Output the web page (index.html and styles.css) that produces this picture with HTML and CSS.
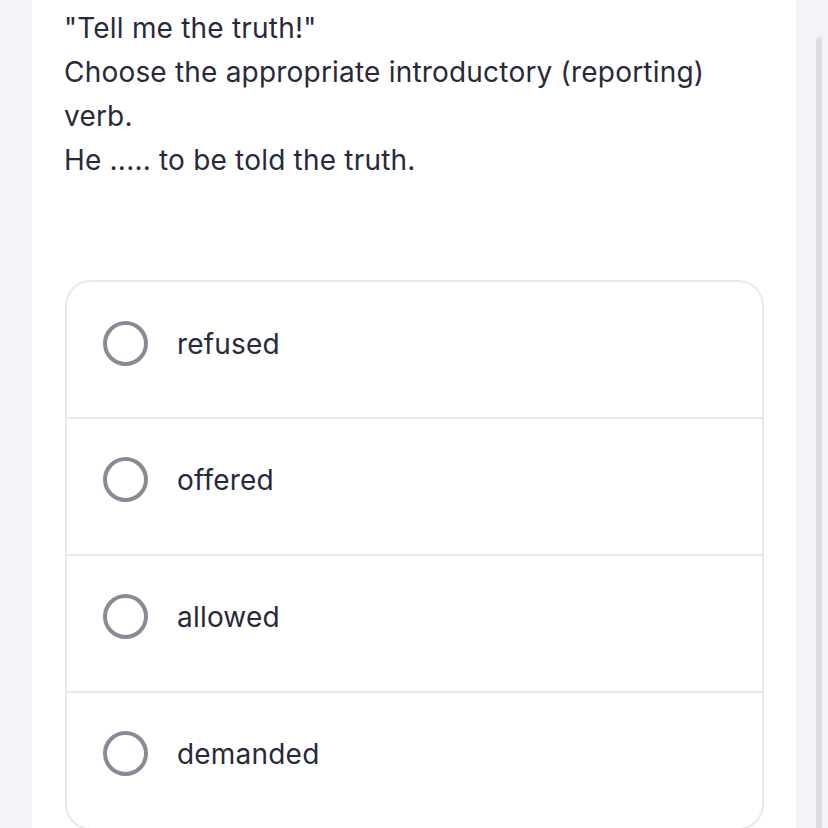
FILE: index.html
```html
<!DOCTYPE html>
<html>
<head>
<meta charset="utf-8">
<link rel="stylesheet" href="styles.css">
</head>
<body>
<div class="page">
  <div class="panel">
    <div class="question">
      <p>"Tell me the truth!"</p>
      <p>Choose the appropriate introductory (reporting) verb.</p>
      <p>He ..... to be told the truth.</p>
    </div>
    <div class="options">
      <div class="option"><span class="radio"></span><span class="label">refused</span></div>
      <div class="option"><span class="radio"></span><span class="label">offered</span></div>
      <div class="option"><span class="radio"></span><span class="label">allowed</span></div>
      <div class="option"><span class="radio"></span><span class="label">demanded</span></div>
    </div>
  </div>
  <div class="scroll"><div class="thumb"></div></div>
</div>
</body>
</html>
```

FILE: styles.css
```css
html, body {
  margin: 0;
  padding: 0;
  background: #f3f3f8;
  height: 100%;
  overflow: hidden;
}
.page {
  display: flex;
  height: 828px;
  font-family: Inter, "Liberation Sans", sans-serif;
  color: #272a3b;
}
.panel {
  margin-left: 32px;
  width: 764px;
  background: #ffffff;
  padding: 6px 33px 0 32px;
  box-sizing: border-box;
}
.question {
  font-size: 28px;
  letter-spacing: 0.2px;
  line-height: 44px;
  padding-right: 20px;
}
.question p {
  margin: 0;
}
.options {
  margin-top: 98px;
  margin-left: 1px;
  border: 2px solid #e8e8ed;
  border-radius: 26px;
  width: 699px;
  box-sizing: border-box;
}
.option {
  display: flex;
  align-items: center;
  height: 137px;
  box-sizing: border-box;
  padding: 0 0 14px 36px;
  border-top: 2px solid #e8e8ed;
}
.option:first-child {
  border-top: none;
  height: 135px;
  padding-bottom: 12px;
}
.radio {
  width: 45px;
  height: 45px;
  box-sizing: border-box;
  border: 4px solid #8b8996;
  border-radius: 50%;
  flex: none;
}
.label {
  margin-left: 29px;
  font-size: 28px;
  letter-spacing: 0.2px;
  line-height: 44px;
}
.scroll {
  margin-left: 20px;
  padding-top: 37px;
}
.thumb {
  width: 6px;
  height: 800px;
  background: #dddde3;
  border-radius: 3px;
}
```
